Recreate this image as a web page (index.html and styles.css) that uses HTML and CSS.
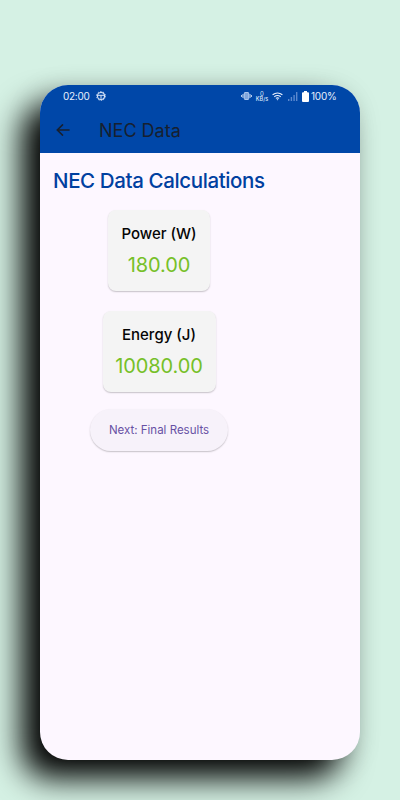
FILE: index.html
```html
<!DOCTYPE html>
<html lang="en">
<head>
<meta charset="utf-8">
<title>NEC Data</title>
<link rel="stylesheet" href="styles.css">
</head>
<body>
<div class="phone">
  <header class="header">
    <div class="status">
      <span class="time">02:00</span>
      <svg class="gear" width="10" height="10" viewBox="0 0 10 10" fill="none" stroke="#dce8fa"><circle cx="5" cy="5" r="3.5" stroke-width="1.1"/><circle cx="5" cy="5" r="4.4" stroke-width=".9" stroke-dasharray="1.5 1.26"/><path d="M2 4.3h6M5 4.5v3.3" stroke-width="1"/></svg>
      <div class="status-right">
        <svg class="vibrate" width="11" height="10" viewBox="0 0 11 10"><rect x="3.3" y="1.500" width="4.400" height="7" rx=".7" fill="#7fa5dc" stroke="#c8dbf5" stroke-width=".8"/><path d="M2 3v4M9 3v4M.6 4v2M10.4 4v2" stroke="#c8dbf5" stroke-width="1"/></svg>
        <span class="speed"><span class="speed-value">0</span><span class="speed-unit">KB/s</span></span>
        <svg class="wifi" width="11" height="9" viewBox="0 0 11 9" fill="none" stroke="#eef4ff" stroke-width="1.1"><path d="M.6 2.8Q5.5-.9 10.4 2.8M2.3 4.7Q5.5 2.4 8.7 4.7M3.9 6.4Q5.5 5.3 7.1 6.4"/><path d="M4.6 7.2h1.8L5.5 8.4z" fill="#eef4ff" stroke="none"/></svg>
        <svg class="signal" width="10" height="9" viewBox="0 0 10 9" fill="#5c89cf"><path d="M0 7h1.4v2H0zM2.7 5h1.4v4H2.7zM5.4 3h1.4v6H5.4zM8 0h1.4v9H8z"/></svg>
        <svg class="battery" width="7" height="11" viewBox="0 0 7 11" fill="#fff"><path d="M2 0h3v1.2h1a1 1 0 0 1 1 1V10a1 1 0 0 1-1 1H1a1 1 0 0 1-1-1V2.2a1 1 0 0 1 1-1h1z"/></svg>
        <span class="percent">100%</span>
      </div>
    </div>
    <div class="appbar">
      <svg class="back" width="14" height="12" viewBox="0 0 14 12" fill="none" stroke="#17202f" stroke-width="1.6"><path d="M13.6 6H1.3M7 .4 1.3 6 7 11.6"/></svg>
      <span class="title">NEC Data</span>
    </div>
  </header>
  <main class="content">
    <h1>NEC Data Calculations</h1>
    <div class="stack">
      <section class="card power"><h2>Power (W)</h2><p>180.00</p></section>
      <section class="card energy"><h2>Energy (J)</h2><p>10080.00</p></section>
      <button class="next">Next: Final Results</button>
    </div>
  </main>
</div>
</body>
</html>
```
FILE: styles.css
```css
* { box-sizing: border-box; }
body {
  margin: 0;
  height: 800px;
  padding: 85px 40px 40px;
  overflow: hidden;
  background: #d5f1e4;
  font-family: Inter, Roboto, sans-serif;
}
.phone {
  height: 675px;
  border-radius: 28px;
  overflow: hidden;
  background: #fdf7ff;
  box-shadow: -19px 19px 32px -1px #000, -6px 6px 30px rgba(0, 0, 0, .14);
}
.header { height: 68px; background: #0047a8; }
.status {
  height: 22px;
  padding: 0 23px;
  display: flex;
  align-items: center;
  color: #e8f0fd;
  font-size: 10px;
  line-height: 12px;
}
.time { width: 26px; letter-spacing: -.3px; }
.gear { margin-left: 7px; }
.status-right { margin-left: auto; display: flex; align-items: center; }
.speed {
  width: 14px;
  margin-left: 3px;
  display: flex;
  flex-direction: column;
  align-items: center;
  color: #dce8fa;
}
.speed-value { font-size: 6px; line-height: 6px; }
.speed-unit { font-size: 5.5px; line-height: 5px; font-weight: 500; }
.wifi { margin-left: 3px; }
.signal { margin-left: 5px; }
.battery { margin-left: 4px; }
.percent { width: 26px; margin-left: 2px; letter-spacing: -.2px; }
.appbar { height: 46px; display: flex; align-items: center; padding-left: 16px; }
.title {
  margin-left: 29px;
  padding-top: 1px;
  color: #17202f;
  font-size: 18px;
  line-height: 24px;
}
.content { padding: 15px 13px; }
h1 {
  margin: 0;
  color: #0040a0;
  font-size: 20.5px;
  line-height: 25px;
  font-weight: 500;
  letter-spacing: -.38px;
  white-space: nowrap;
}
.stack {
  width: 212px;
  margin-top: 17px;
  display: flex;
  flex-direction: column;
  align-items: center;
}
.card {
  height: 81px;
  padding-top: 13px;
  border-radius: 8px;
  background: #f4f4f4;
  box-shadow: 0 1px 1.5px rgba(0, 0, 0, .22);
  text-align: center;
}
.power { width: 102px; }
.energy { width: 113px; margin-top: 20px; }
h2 {
  margin: 0;
  color: #050505;
  font-size: 15px;
  line-height: 22px;
  font-weight: 500;
}
.card p {
  margin: 7px 0 0;
  color: #76c028;
  font-size: 20px;
  line-height: 26px;
  letter-spacing: -.1px;
}
.next {
  width: 138px;
  height: 42px;
  margin-top: 17px;
  padding: 0;
  border: 0;
  border-radius: 21px;
  background: #f7f2fa;
  box-shadow: 0 1px 1.5px rgba(0, 0, 0, .22);
  color: #6750a4;
  font: 400 11.5px Inter, Roboto, sans-serif;
}
```
